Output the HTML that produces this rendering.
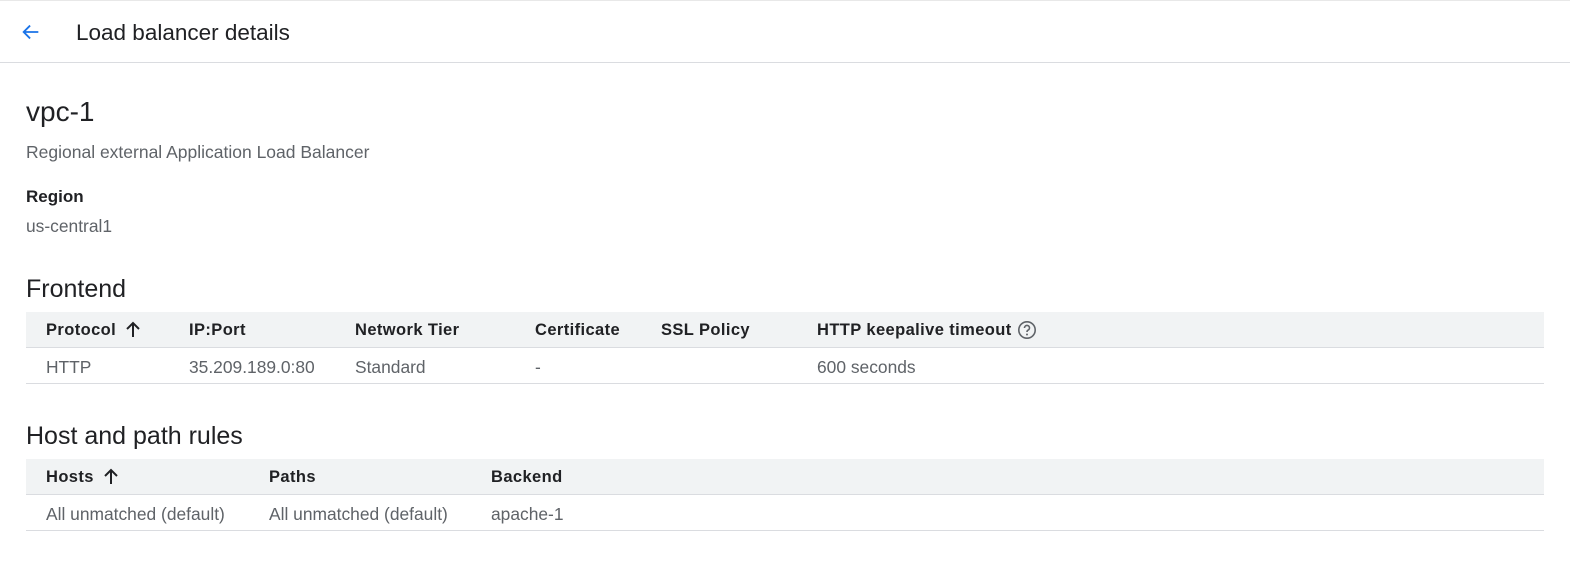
<!DOCTYPE html>
<html><head><style>
*{margin:0;padding:0;box-sizing:border-box}
body{width:1570px;height:566px;background:#fff;font-family:"Liberation Sans",sans-serif;color:#202124;position:relative;overflow:hidden}
.a{position:absolute;white-space:nowrap;line-height:1}
.hdr{position:absolute;left:0;top:0;width:1570px;height:63px;border-top:1px solid #e8e8e8;border-bottom:1px solid #dadce0}
.band{position:absolute;left:26px;width:1518px;background:#f1f3f4;border-bottom:1px solid #dadce0}
.line{position:absolute;left:26px;width:1518px;height:1px;background:#dadce0}
.th{font-size:16.5px;color:#202124;font-weight:bold;letter-spacing:0.4px}
.td{font-size:17.4px;color:#5f6368}
</style></head><body>
<div class="hdr"></div>
<svg class="a" style="left:20px;top:21px" width="22" height="22" viewBox="0 0 24 24"><path d="M20 12H5M11 5l-7 7 7 7" fill="none" stroke="#1a73e8" stroke-width="2"/></svg>
<div class="a" style="left:76px;top:22px;font-size:22.5px">Load balancer details</div>
<div class="a" style="left:26px;top:98px;font-size:28px">vpc-1</div>
<div class="a" style="left:26px;top:144px;font-size:17.5px;color:#5f6368">Regional external Application Load Balancer</div>
<div class="a" style="left:26px;top:188px;font-size:17px;font-weight:bold">Region</div>
<div class="a" style="left:26px;top:218px;font-size:17.4px;color:#5f6368">us-central1</div>
<div class="a" style="left:26px;top:277px;font-size:25px">Frontend</div>
<div class="band" style="top:312px;height:36px"></div>
<div class="a th" style="left:46px;top:322px">Protocol</div>
<svg class="a" style="left:125px;top:320px" width="16" height="18" viewBox="0 0 16 18"><path d="M8 17V3M2 9l6-6 6 6" fill="none" stroke="#202124" stroke-width="2"/></svg>
<div class="a th" style="left:189px;top:322px">IP:Port</div>
<div class="a th" style="left:355px;top:322px">Network Tier</div>
<div class="a th" style="left:535px;top:322px">Certificate</div>
<div class="a th" style="left:661px;top:322px">SSL Policy</div>
<div class="a th" style="left:817px;top:322px">HTTP keepalive timeout</div>
<svg class="a" style="left:1017px;top:320px" width="20" height="20" viewBox="0 0 20 20"><circle cx="10" cy="10" r="8.2" fill="none" stroke="#5f6368" stroke-width="1.6"/><path d="M7.5 8a2.5 2.5 0 1 1 3.5 2.2c-.8.4-1 .9-1 1.8" fill="none" stroke="#5f6368" stroke-width="1.6"/><circle cx="10" cy="14.5" r="1" fill="#5f6368"/></svg>
<div class="a td" style="left:46px;top:359px">HTTP</div>
<div class="a td" style="left:189px;top:359px">35.209.189.0:80</div>
<div class="a td" style="left:355px;top:359px">Standard</div>
<div class="a td" style="left:535px;top:359px">-</div>
<div class="a td" style="left:817px;top:359px">600 seconds</div>
<div class="line" style="top:383px"></div>
<div class="a" style="left:26px;top:424px;font-size:25px">Host and path rules</div>
<div class="band" style="top:459px;height:36px"></div>
<div class="a th" style="left:46px;top:469px">Hosts</div>
<svg class="a" style="left:103px;top:467px" width="16" height="18" viewBox="0 0 16 18"><path d="M8 17V3M2 9l6-6 6 6" fill="none" stroke="#202124" stroke-width="2"/></svg>
<div class="a th" style="left:269px;top:469px">Paths</div>
<div class="a th" style="left:491px;top:469px">Backend</div>
<div class="a td" style="left:46px;top:506px">All unmatched (default)</div>
<div class="a td" style="left:269px;top:506px">All unmatched (default)</div>
<div class="a td" style="left:491px;top:506px">apache-1</div>
<div class="line" style="top:530px"></div>
</body></html>
